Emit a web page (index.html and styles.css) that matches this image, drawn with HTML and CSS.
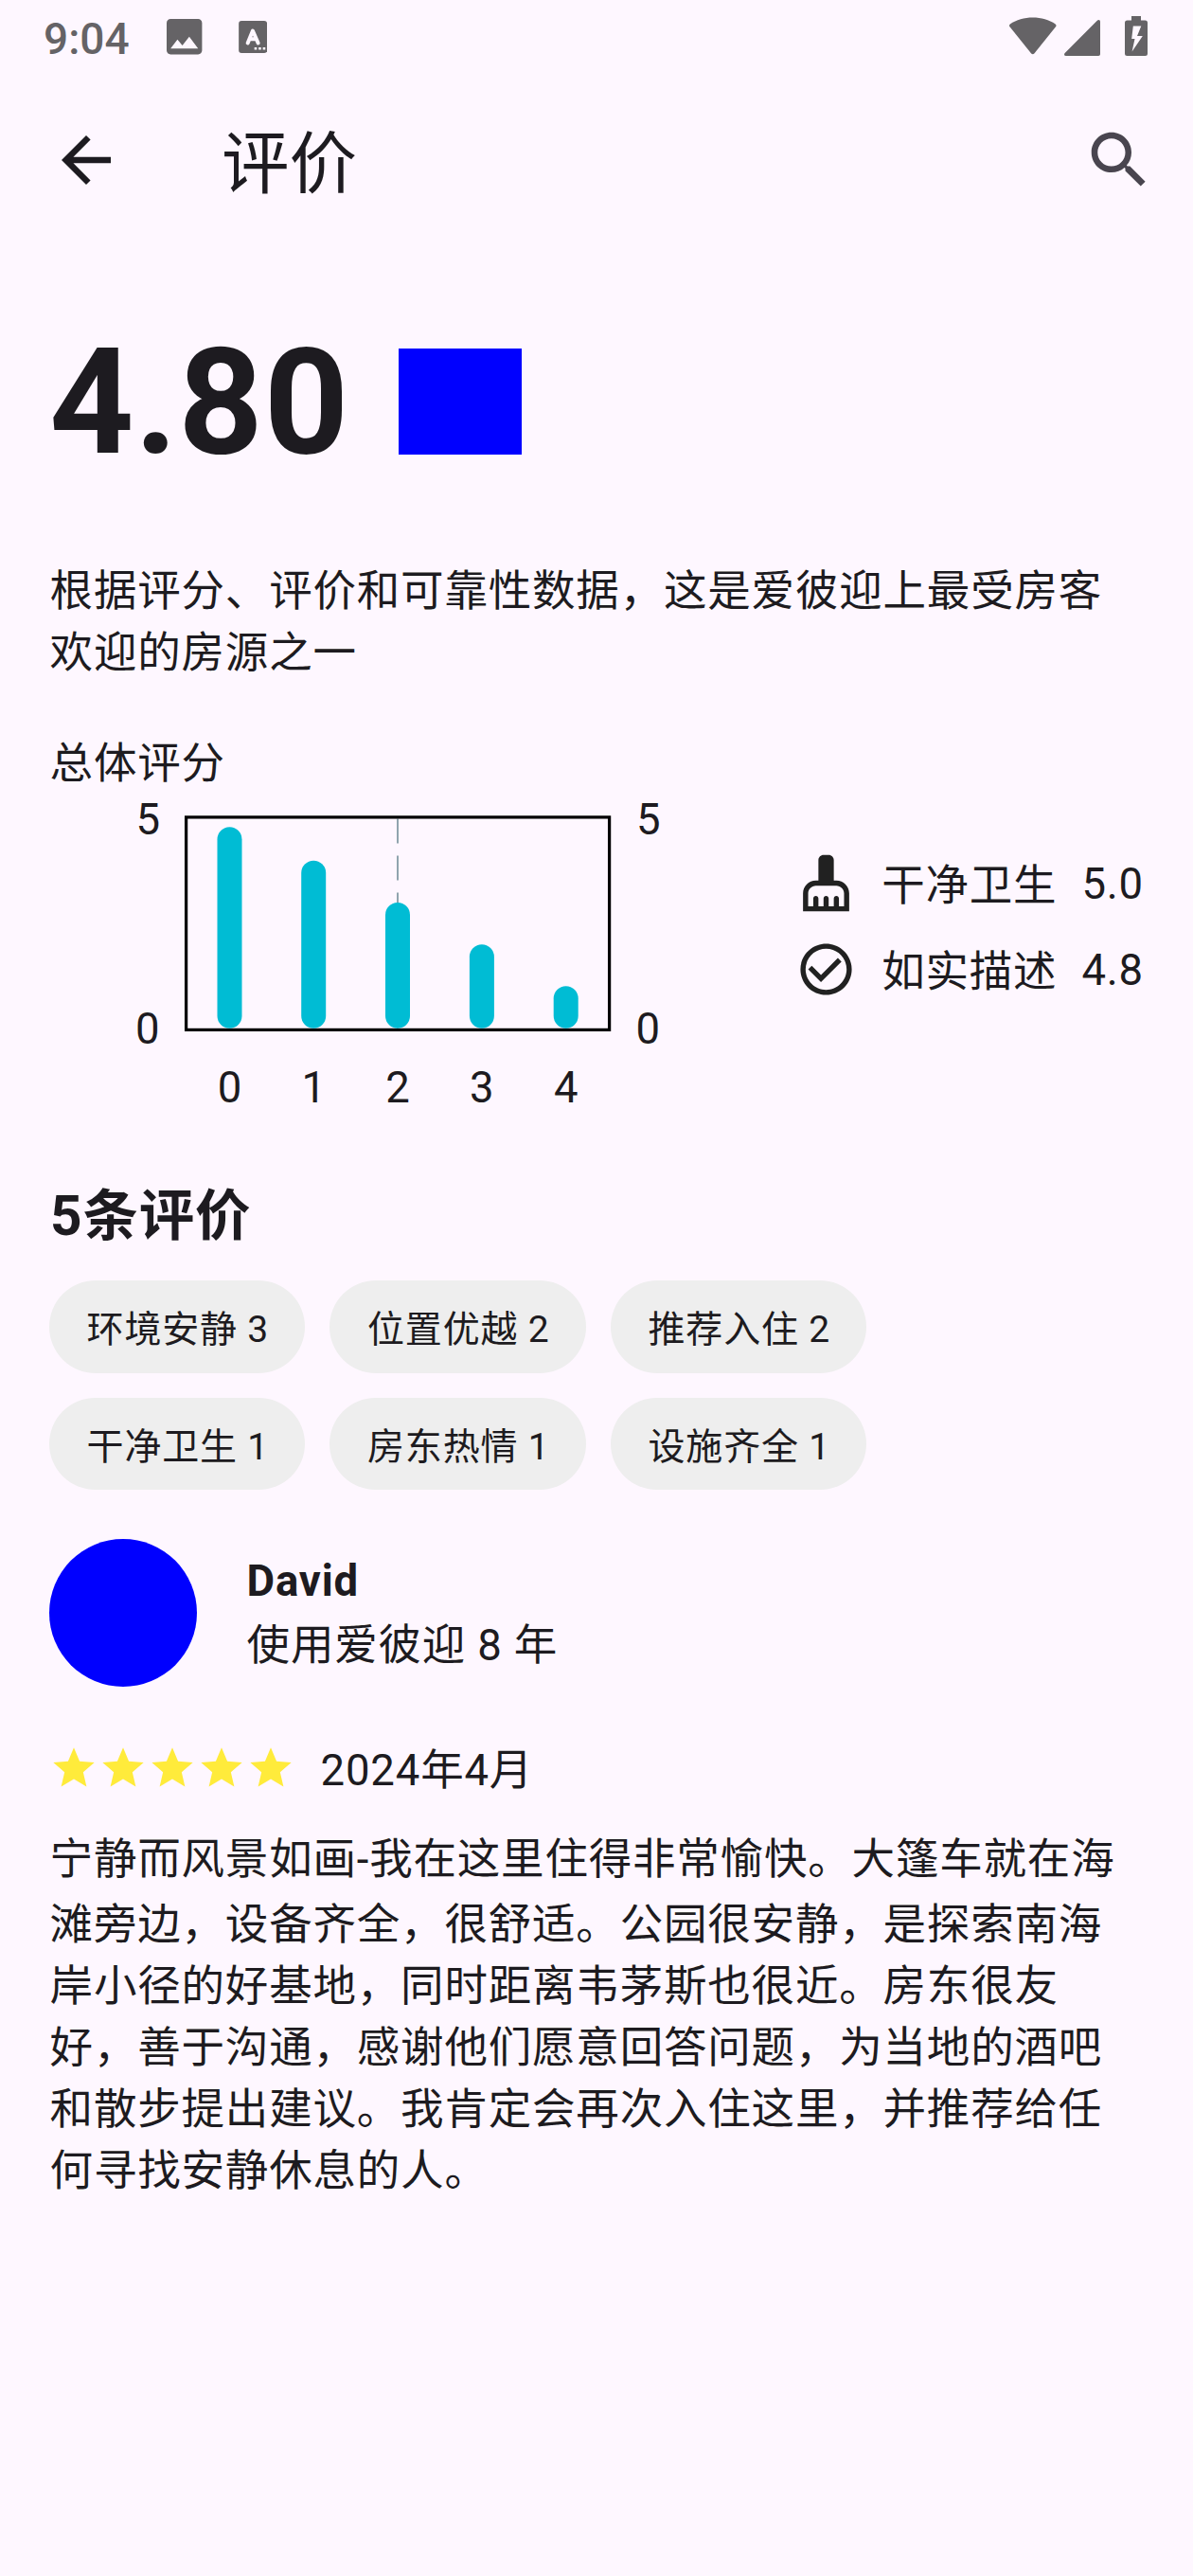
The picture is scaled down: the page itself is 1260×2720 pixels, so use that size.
FILE: index.html
```html
<!DOCTYPE html>
<html lang="zh-CN">
<head>
<meta charset="utf-8">
<title>评价</title>
<link rel="stylesheet" href="styles.css">
</head>
<body>
<div class="status-bar">
  <span class="clock">9:04</span>
  <svg class="status-image" viewBox="3 3 18 18"><path d="M21 19V5c0-1.100-.9-2-2-2H5c-1.100 0-2 .9-2 2v14c0 1.100.9 2 2 2h14c1.100 0 2-.9 2-2zM8.500 13.500l2.500 3.010L14.500 12l4.500 6H5l3.500-4.500z"/></svg>
  <svg class="status-input" viewBox="0 0 30 34">
    <rect width="30" height="34" rx="3"/>
    <path class="input-letter" d="M9.500 23.500L14.800 10.500L20.500 23.500M11.500 19.200H18.500"/>
    <path class="input-dots" d="M16.500 28h2.600v2.600h-2.600zM21 28h2.600v2.600H21zM25.500 28h2.600v2.600h-2.600z"/>
  </svg>
  <div class="status-right">
    <svg class="wifi" viewBox="0 0 50 40"><path d="M.8 7.300C7.500 2.400 16 .2 25 .2S42.500 2.400 49.200 7.300C50.200 8.100 50.200 9.300 49.500 10.200L26.600 38.700Q25 40.200 23.400 38.700L.5 10.200C-.2 9.300-.2 8.100.8 7.300z"/></svg>
    <svg class="signal" viewBox="0 0 38 38"><path d="M2 38H36.200Q38 38 38 36.200V1.800Q38 0 36.500 0Q35.500 0 34.800.7L.7 34.900Q0 35.600 0 36.500Q0 38 2 38z"/></svg>
    <svg class="battery" viewBox="0 0 24 42"><path fill-rule="evenodd" d="M7 0h10v4.500h4.500Q24 4.500 24 7v32.500Q24 42 21.500 42h-19Q0 42 0 39.500V7Q0 4.500 2.500 4.500H7zM8.800 10.500L7.200 24h3.300L7.600 37.500L18.800 21H13L17.300 10.500z"/></svg>
  </div>
</div>

<header class="app-bar">
  <svg class="back" viewBox="0 0 24 24"><path d="M20 11H7.830l5.590-5.590L12 4l-8 8 8 8 1.410-1.410L7.830 13H20v-2z"/></svg>
  <h1 class="title">评价</h1>
  <svg class="search" viewBox="0 0 24 24"><path d="M15.500 14h-.79l-.28-.27C15.410 12.590 16 11.110 16 9.500 16 5.910 13.090 3 9.500 3S3 5.910 3 9.500 5.910 16 9.500 16c1.610 0 3.090-.59 4.230-1.570l.27.28v.79l5 4.990L20.490 19l-4.990-5zm-6 0C7.010 14 5 11.990 5 9.500S7.010 5 9.500 5 14 7.010 14 9.500 11.990 14 9.500 14z"/></svg>
</header>

<main class="content">
  <section class="rating">
    <span class="score">4.80</span>
    <span class="badge"></span>
  </section>

  <p class="summary">根据评分、评价和可靠性数据，这是爱彼迎上最受房客<br>欢迎的房源之一</p>

  <p class="label">总体评分</p>
  <section class="overview">
    <svg class="chart" viewBox="52 839 648 348">
      <path class="guide" d="M420 864.500V1086"/>
      <rect class="frame" x="196.600" y="862.900" width="447" height="224.500"/>
      <g class="bars">
        <rect x="229.500" y="873.300" width="26" height="212.500" rx="13"/>
        <rect x="318.200" y="908.700" width="26" height="177.100" rx="13"/>
        <rect x="407" y="953" width="26" height="132.800" rx="13"/>
        <rect x="495.900" y="997.200" width="26" height="88.600" rx="13"/>
        <rect x="584.700" y="1041.200" width="26" height="44.600" rx="13"/>
      </g>
      <text x="143.500" y="881">5</text>
      <text x="143" y="1102">0</text>
      <text x="672" y="881">5</text>
      <text x="671.500" y="1102">0</text>
      <g class="ticks">
        <text x="242.500" y="1163.500">0</text>
        <text x="331.200" y="1163.500">1</text>
        <text x="420" y="1163.500">2</text>
        <text x="508.900" y="1163.500">3</text>
        <text x="597.700" y="1163.500">4</text>
      </g>
    </svg>
    <ul class="features">
      <li>
        <svg viewBox="0 0 24 24"><path d="M16 11h-1V3c0-1.100-.9-2-2-2h-2c-1.100 0-2 .9-2 2v8H8c-2.760 0-5 2.240-5 5v7h18v-7c0-2.760-2.240-5-5-5zM19 21h-2v-3c0-.55-.45-1-1-1s-1 .45-1 1v3h-2v-3c0-.55-.45-1-1-1s-1 .45-1 1v3H9v-3c0-.55-.45-1-1-1s-1 .45-1 1v3H5v-5c0-1.650 1.350-3 3-3h8c1.650 0 3 1.350 3 3v5z" fill-rule="evenodd"/></svg>
        <span class="name">干净卫生</span><span class="value">5.0</span>
      </li>
      <li>
        <svg viewBox="0 0 24 24"><path d="M16.590 7.580L10 14.170l-3.590-3.580L5 12l5 5 8-8zM12 2C6.480 2 2 6.480 2 12s4.480 10 10 10 10-4.480 10-10S17.520 2 12 2zm0 18c-4.420 0-8-3.580-8-8s3.580-8 8-8 8 3.580 8 8-3.580 8-8 8z"/></svg>
        <span class="name">如实描述</span><span class="value">4.8</span>
      </li>
    </ul>
  </section>

  <h2 class="count">5条评价</h2>
  <ul class="chips">
    <li>环境安静 3</li>
    <li>位置优越 2</li>
    <li>推荐入住 2</li>
    <li>干净卫生 1</li>
    <li>房东热情 1</li>
    <li>设施齐全 1</li>
  </ul>

  <article class="review">
    <div class="author">
      <span class="avatar"></span>
      <div class="who">
        <strong>David</strong>
        <span>使用爱彼迎 8 年</span>
      </div>
    </div>
    <div class="meta">
      <div class="stars">
        <svg viewBox="0 0 24 24"><path d="M12 17.270L18.180 21l-1.640-7.030L22 9.240l-7.190-.61L12 2 9.190 8.630 2 9.240l5.460 4.730L5.820 21z"/></svg>
        <svg viewBox="0 0 24 24"><path d="M12 17.270L18.180 21l-1.640-7.030L22 9.240l-7.190-.61L12 2 9.190 8.630 2 9.240l5.460 4.730L5.820 21z"/></svg>
        <svg viewBox="0 0 24 24"><path d="M12 17.270L18.180 21l-1.640-7.030L22 9.240l-7.190-.61L12 2 9.190 8.630 2 9.240l5.460 4.730L5.820 21z"/></svg>
        <svg viewBox="0 0 24 24"><path d="M12 17.270L18.180 21l-1.640-7.030L22 9.240l-7.190-.61L12 2 9.190 8.630 2 9.240l5.460 4.730L5.820 21z"/></svg>
        <svg viewBox="0 0 24 24"><path d="M12 17.270L18.180 21l-1.640-7.030L22 9.240l-7.190-.61L12 2 9.190 8.630 2 9.240l5.460 4.730L5.820 21z"/></svg>
      </div>
      <time>2024年4月</time>
    </div>
    <p class="text"><span class="lead">宁静而风景如画-我在这里住得非常愉快。大篷车就在海</span>滩旁边，设备齐全，很舒适。公园很安静，是探索南海<br>岸小径的好基地，同时距离韦茅斯也很近。房东很友<br>好，善于沟通，感谢他们愿意回答问题，为当地的酒吧<br>和散步提出建议。我肯定会再次入住这里，并推荐给任<br>何寻找安静休息的人。</p>
  </article>
</main>
</body>
</html>
```
FILE: styles.css
```css
* { box-sizing: border-box; margin: 0; padding: 0; }

body {
  width: 1260px;
  min-height: 2720px;
  background: #fef7ff;
  color: #1d1b20;
  font: 400 45.5px/65px Roboto, "Noto Sans CJK SC", sans-serif;
  letter-spacing: 0.8125px;
  white-space: nowrap;
}

svg { display: block; flex: none; }
ul { list-style: none; }

/* System status bar */
.status-bar {
  display: flex;
  align-items: flex-start;
  height: 78px;
  padding-left: 46px;
  color: #656366;
  fill: #656366;
}
.clock {
  width: 130.300px;
  padding-top: 9px;
  font-weight: 500;
  font-size: 46px;
  letter-spacing: 0;
}
.status-image { width: 37.400px; height: 37.400px; margin-top: 20.300px; }
.status-input { width: 30.300px; height: 34px; margin: 22px 0 0 38.300px; }
.input-letter { fill: none; stroke: #fef7ff; stroke-width: 4; stroke-linejoin: round; stroke-linecap: round; }
.input-dots { fill: #fef7ff; }
.status-right { display: flex; margin-left: auto; padding-right: 48px; }
.wifi { width: 49.500px; height: 40px; margin: 18px 8.500px 0 0; }
.signal { width: 38px; height: 38px; margin: 21px 26px 0 0; }
.battery { width: 24px; height: 42px; margin-top: 17px; }

/* App bar */
.app-bar {
  display: flex;
  align-items: center;
  height: 182px;
  padding: 0 39px 0 52px;
}
.back { width: 78px; height: 78px; fill: #1d1b20; }
.title {
  margin-left: 104px;
  padding-top: 9px;
  font-weight: 400;
  font-size: 71.500px;
  line-height: 91px;
  letter-spacing: 0;
}
.search { width: 78px; height: 78px; margin-left: auto; fill: #49454f; }

.content { padding: 73px 52px 0; }

/* Overall score */
.rating { display: flex; align-items: center; gap: 52px; height: 182px; }
.score { padding-top: 2px; font-weight: 700; font-size: 156px; line-height: 182px; }
.badge { width: 130px; height: 112px; background: #00f; }
.summary { margin-top: 77px; padding-left: 0.6px; }
.label { margin-top: 52px; padding-left: 0.6px; }

/* Chart and features */
.overview { display: flex; justify-content: space-between; height: 348px; }
.chart { width: 648px; height: 348px; fill: #1d1b20; }
.frame { fill: none; stroke: #000; stroke-width: 3.250; }
.bars { fill: #00bcd4; }
.guide { stroke: #90a4ae; stroke-width: 2; stroke-dasharray: 26 13; }
.ticks { text-anchor: middle; letter-spacing: 0; }
.features { display: flex; flex-direction: column; gap: 26px; padding-top: 60.700px; }
.features li { display: flex; align-items: center; gap: 26px; height: 65px; }
.features svg { width: 65px; height: 65px; fill: #212121; }
.name { padding-top: 7px; }
.value { padding-top: 2px; }

/* Review tags */
.count {
  margin-top: 57.500px;
  padding-left: 1px;
  font-weight: 700;
  font-size: 58.500px;
  line-height: 78px;
}
.chips {
  display: grid;
  grid-template-columns: repeat(3, max-content);
  gap: 26px;
  margin-top: 29.500px;
}
.chips li {
  height: 97.500px;
  padding: 4px 38.400px 0 39.600px;
  border-radius: 49px;
  background: #eee;
  font-size: 39px;
  line-height: 97.500px;
}

/* Review */
.review { margin-top: 52px; }
.author { display: flex; gap: 52.600px; }
.avatar { width: 156px; height: 156px; border-radius: 50%; background: #00f; }
.who { display: flex; flex-direction: column; gap: 2.700px; padding-top: 12px; }
.who strong { font-weight: 700; }
.meta { display: flex; gap: 26.600px; margin-top: 56px; }
.stars { display: flex; padding-top: 4px; }
.stars svg { width: 52px; height: 52px; fill: #ffeb3b; }
.text { margin-top: 29px; padding-left: 0.6px; }
.lead { display: block; height: 68.700px; }
```
